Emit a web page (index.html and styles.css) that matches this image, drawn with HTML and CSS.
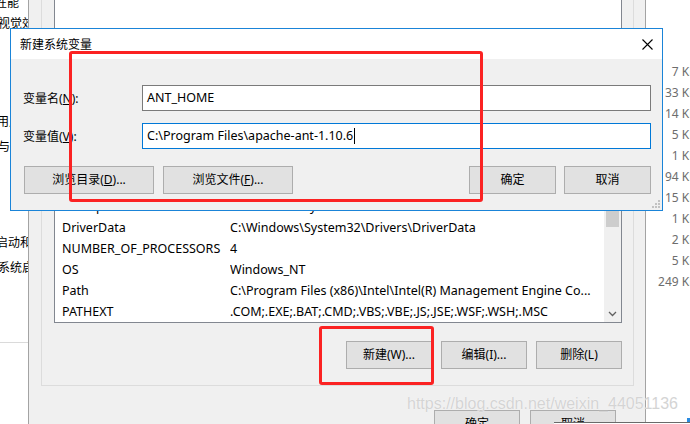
FILE: index.html
```html
<!DOCTYPE html>
<html lang="zh-CN">
<head>
<meta charset="utf-8">
<title>新建系统变量</title>
<link rel="stylesheet" href="styles.css">
</head>
<body>
<div class="desk">
  <div class="sysprops">
    <div class="sp-line sp-title sp-perf">性能</div>
    <div class="sp-line sp-text">视觉效果，处理器计划，内存使用，以及虚拟内存</div>
    <div class="sp-line sp-title sp-profile">用户配置文件</div>
    <div class="sp-line sp-text sp-desc">与登录帐户相关的桌面设置</div>
    <div class="sp-line sp-title sp-startup">启动和故障恢复</div>
    <div class="sp-line sp-text sp-desc">系统启动、系统故障和调试信息</div>
    <div class="sp-rule"></div>
  </div>

  <div class="explorer">
    <ul class="sizes">
      <li>7 KB</li>
      <li>33 KB</li>
      <li>14 KB</li>
      <li>5 KB</li>
      <li>1 KB</li>
      <li>94 KB</li>
      <li>15 KB</li>
      <li>1 KB</li>
      <li>2 KB</li>
      <li>5 KB</li>
      <li>249 KB</li>
    </ul>
  </div>

  <div class="envwin">
    <div class="grp grp-user">
      <div class="lb lb-user"></div>
    </div>
    <div class="grp grp-sys">
      <div class="lb lb-sys">
        <div class="lb-main">
          <div class="lb-head"><span class="c1">变量</span><span class="c2">值</span></div>
          <div class="lb-row"><span class="c1">ComSpec</span><span class="c2">C:\Windows\system32\cmd.exe</span></div>
          <div class="lb-row"><span class="c1">DriverData</span><span class="c2">C:\Windows\System32\Drivers\DriverData</span></div>
          <div class="lb-row"><span class="c1">NUMBER_OF_PROCESSORS</span><span class="c2">4</span></div>
          <div class="lb-row"><span class="c1">OS</span><span class="c2">Windows_NT</span></div>
          <div class="lb-row"><span class="c1">Path</span><span class="c2">C:\Program Files (x86)\Intel\Intel(R) Management Engine Co...</span></div>
          <div class="lb-row"><span class="c1">PATHEXT</span><span class="c2">.COM;.EXE;.BAT;.CMD;.VBS;.VBE;.JS;.JSE;.WSF;.WSH;.MSC</span></div>
        </div>
        <div class="lb-scroll">
          <div class="sb-arrow"></div>
          <div class="sb-thumb"></div>
          <div class="sb-track"></div>
          <div class="sb-arrow">
            <svg width="17" height="17" viewBox="0 0 17 17"><path d="M5 7L8.5 10.5L12 7" fill="none" stroke="#606060" stroke-width="1.3"/></svg>
          </div>
        </div>
      </div>
      <div class="btnrow">
        <button class="btn">新建(W)...</button>
        <button class="btn">编辑(I)...</button>
        <button class="btn">删除(L)</button>
      </div>
    </div>
    <div class="btnrow main-btns">
      <button class="btn">确定</button>
      <button class="btn">取消</button>
    </div>
  </div>

  <div class="dlg">
    <div class="dlg-title">
      <span class="dlg-caption">新建系统变量</span>
      <span class="dlg-close">
        <svg width="11" height="11" viewBox="0 0 11 11"><path d="M0.5 0.5L10.5 10.5M10.5 0.5L0.5 10.5" stroke="#000" stroke-width="1.1" fill="none"/></svg>
      </span>
    </div>
    <div class="dlg-body">
      <div class="field">
        <label class="lbl">变量名(<u>N</u>):</label>
        <div class="input">ANT_HOME</div>
      </div>
      <div class="field">
        <label class="lbl">变量值(<u>V</u>):</label>
        <div class="input focus">C:\Program Files\apache-ant-1.10.6<span class="caret"></span></div>
      </div>
      <div class="dlg-btns">
        <button class="btn wide">浏览目录(<u>D</u>)...</button>
        <button class="btn wide">浏览文件(<u>F</u>)...</button>
        <span class="spacer"></span>
        <button class="btn mid">确定</button>
        <button class="btn mid">取消</button>
      </div>
    </div>
    <svg class="grip" width="8" height="8" viewBox="0 0 8 8">
      <rect x="6" y="0" width="2" height="2" fill="#c2c2c2"/>
      <rect x="3" y="3" width="2" height="2" fill="#c2c2c2"/>
      <rect x="6" y="3" width="2" height="2" fill="#c2c2c2"/>
      <rect x="0" y="6" width="2" height="2" fill="#c2c2c2"/>
      <rect x="3" y="6" width="2" height="2" fill="#c2c2c2"/>
      <rect x="6" y="6" width="2" height="2" fill="#c2c2c2"/>
    </svg>
  </div>

  <div class="mark mark-1"></div>
  <div class="mark mark-2"></div>

  <div class="watermark">https://blog.csdn.net/weixin_44051136</div>
  <div class="frontwin"></div>
  <div class="bluebit"></div>
</div>
</body>
</html>
```

FILE: styles.css
```css
* { box-sizing: border-box; }
html, body { margin: 0; padding: 0; }
body {
  width: 690px;
  height: 424px;
  overflow: hidden;
  background: #fff;
  font-family: "Noto Sans", "Noto Sans CJK SC", sans-serif;
  font-size: 12px;
  color: #000;
}
.desk { position: relative; width: 690px; height: 424px; overflow: hidden; }

/* background: system properties window (left) */
.sysprops {
  position: absolute; left: 0; top: 0;
  width: 28px; height: 424px;
  background: #fff; overflow: hidden;
}
.sp-line {
  white-space: nowrap;
  line-height: 21px;
  height: 21px;
  font-family: "Noto Sans CJK SC", sans-serif;
  font-size: 12px;
}
.sp-title { margin-left: -5px; }
.sp-text { margin-left: -2px; }
.sp-perf { margin-top: -9px; }
.sp-profile { margin-top: 77px; margin-left: -3px; }
.sp-desc { margin-top: 4px; }
.sp-startup { margin-top: 75px; margin-left: -4px; }
.sp-rule { margin-top: 65px; height: 1px; background: #dadada; }

/* background: explorer window (right) */
.explorer {
  position: absolute; left: 646px; top: 0;
  width: 44px; height: 424px;
  background: #fff; overflow: hidden;
}
.sizes {
  list-style: none; margin: 0; padding: 61px 0 0 0;
  width: 51px;
  text-align: right;
  color: #6d6d6d;
  font-size: 12px;
  line-height: 21px;
  white-space: nowrap;
}

/* environment variables window */
.envwin {
  position: absolute; left: 28px; top: 0;
  width: 618px; height: 424px;
  background: #f0f0f0;
  border-left: 1px solid #a3a3a3;
  border-right: 1px solid #a3a3a3;
  display: flex; flex-direction: column;
}
.envwin > * { flex: none; }
.grp {
  margin: 0 11px 0 12px;
  border-left: 1px solid #dcdcdc;
  border-right: 1px solid #dcdcdc;
}
.grp-user {
  height: 150px;
  padding: 0 11px 0 12px;
  border-bottom: 1px solid #dcdcdc;
}
.lb { background: #fff; border: 1px solid #828790; }
.lb-user { height: 135px; border-top: none; }
.grp-sys {
  border-top: 1px solid #dcdcdc;
  border-bottom: 1px solid #dcdcdc;
  padding: 21px 11px 16px 12px;
}
.lb-sys { display: flex; height: 151px; }
.lb-main { flex: 1; overflow: hidden; }
.lb-head {
  display: flex; height: 23px; line-height: 23px;
  padding-left: 7px;
  border-bottom: 1px solid #e5e5e5;
}
.lb-row {
  display: flex; height: 21px; line-height: 21px;
  padding-left: 7px;
  font-size: 12.5px;
  white-space: nowrap;
}
.c1 { width: 168px; flex: none; overflow: hidden; }
.c2 { flex: 1; overflow: hidden; }
.lb-scroll {
  width: 17px; flex: none;
  background: #f0f0f0;
  display: flex; flex-direction: column;
}
.sb-arrow { height: 17px; flex: none; }
.sb-thumb { height: 37px; margin: 0 2px; background: #cdcdcd; flex: none; }
.sb-track { flex: 1; }

.btnrow { display: flex; justify-content: flex-end; gap: 9px; margin-top: 18px; }
.btn {
  width: 86px; height: 28px;
  background: #e1e1e1;
  border: 1px solid #adadad;
  font-family: "Noto Sans", "Noto Sans CJK SC", sans-serif;
  font-size: 12px;
  color: #000;
  padding: 0;
  line-height: 26px;
}
.btn u { text-underline-offset: 1px; }
.main-btns { margin-top: 24px; gap: 10px; padding-right: 29px; }

/* new system variable dialog */
.dlg {
  position: absolute; left: 10px; top: 28px;
  width: 653px; height: 183px;
  border: 1px solid #1a84d8;
  background: #f0f0f0;
  display: flex; flex-direction: column;
}
.dlg-title {
  height: 30px; flex: none;
  background: #fff;
  display: flex; align-items: center;
  padding-left: 9px;
}
.dlg-caption { flex: 1; font-size: 12px; }
.dlg-close {
  width: 30px; height: 30px;
  display: flex; align-items: center; justify-content: center;
}
.dlg-body { padding: 26px 11px 0 12px; flex: 1; }
.field { display: flex; align-items: center; margin-bottom: 12px; }
.lbl { width: 119px; flex: none; font-size: 12px; }
.lbl u { text-underline-offset: 1px; }
.input {
  flex: 1; height: 26px;
  background: #fff;
  border: 1px solid #7a7a7a;
  padding-left: 4px;
  font-size: 12.5px;
  line-height: 24px;
  white-space: nowrap;
}
.input.focus { border-color: #0078d7; }
.caret {
  display: inline-block;
  width: 1px; height: 16px;
  background: #000;
  vertical-align: -4px;
  margin-left: 1px;
}
.dlg-btns { display: flex; gap: 9px; margin-top: 17px; padding-left: 1px; }
.btn.wide { width: 130px; }
.btn.mid { width: 87px; }
.dlg-btns .mid + .mid { margin-left: -1px; }
.spacer { flex: 1; }
.grip { position: absolute; right: 2px; bottom: 2px; }

/* red annotation marks */
.mark {
  position: absolute;
  border: 3px solid #fb2222;
  border-radius: 3px;
}
.mark-1 { left: 69px; top: 51px; width: 414px; height: 151px; }
.mark-2 { left: 319px; top: 326px; width: 115px; height: 59px; }

.watermark {
  position: absolute; left: 407px; top: 394px;
  font-family: "Liberation Sans", sans-serif;
  font-size: 16px;
  line-height: 20px;
  color: #d4d4d4;
  text-shadow: 0 0 1px #fff;
  white-space: nowrap;
}
.frontwin {
  position: absolute; left: 554px; top: 422px;
  width: 136px; height: 2px;
  border-top: 1px solid #6a6a6a;
  background: #fff;
}
.bluebit {
  position: absolute; left: 687px; top: 418px;
  width: 3px; height: 4px;
  background: #2a8be0;
}
```
